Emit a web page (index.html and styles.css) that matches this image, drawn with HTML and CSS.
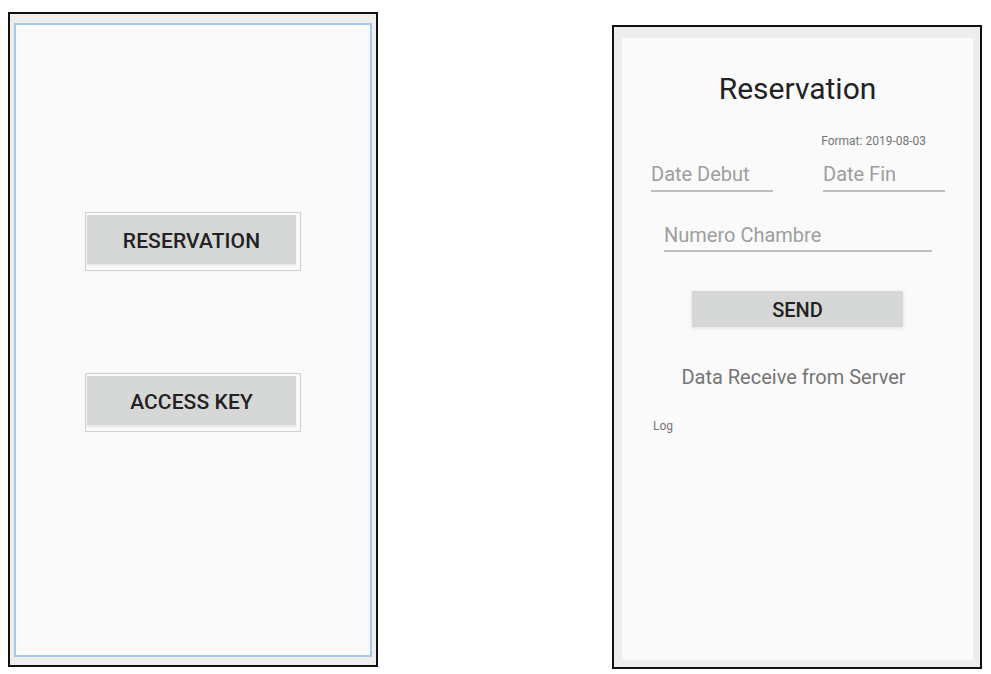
FILE: index.html
```html
<!DOCTYPE html>
<html lang="fr">
<head>
<meta charset="utf-8">
<title>Reservation</title>
<link rel="stylesheet" href="styles.css">
</head>
<body>
  <div class="frame frame-left">
    <div class="canvas">
      <div class="btn-wrap first"><div class="btn">RESERVATION</div></div>
      <div class="btn-wrap second"><div class="btn">ACCESS KEY</div></div>
    </div>
  </div>

  <div class="frame frame-right">
    <div class="screen">
      <h1 class="title">Reservation</h1>
      <div class="format">Format: 2019-08-03</div>
      <div class="date-row">
        <div class="field date">Date Debut</div>
        <div class="field date">Date Fin</div>
      </div>
      <div class="field room">Numero Chambre</div>
      <div class="send">SEND</div>
      <div class="data">Data Receive from Server</div>
      <div class="log">Log</div>
    </div>
  </div>
</body>
</html>
```

FILE: styles.css
```css
* { box-sizing: border-box; }

body {
  margin: 0;
  background: #ffffff;
  display: flex;
  align-items: flex-start;
  font-family: Roboto, "Liberation Sans", sans-serif;
}

.frame {
  border: 2px solid #111111;
  background: #eeeeee;
  width: 370px;
}

.frame-left {
  margin-left: 8px;
  margin-top: 12px;
  height: 655px;
  padding: 9px 4px 8px 4px;
}

.canvas {
  height: 100%;
  border: 2px solid #a6c8ea;
  background: #f9f9f9;
  display: flex;
  flex-direction: column;
  align-items: center;
}

.btn-wrap {
  width: 216px;
  height: 59px;
  border: 1px solid #cfcfcf;
  padding: 2px 4px 6px 1px;
  background: #fafafa;
}
.btn-wrap.first { margin-top: 187px; }
.btn-wrap.second { margin-top: 102px; }

.btn {
  height: 100%;
  background: #d6d7d7;
  color: #222222;
  font-size: 21px;
  font-weight: 500;
  letter-spacing: 0.1px;
  padding-top: 3px;
  display: flex;
  align-items: center;
  justify-content: center;
  box-shadow: 0 2px 2px rgba(0,0,0,0.08);
}

.frame-right {
  margin-left: 234px;
  margin-top: 25px;
  height: 644px;
  padding: 11px 7px 7px 8px;
}

.screen {
  height: 100%;
  background: #fafafa;
  display: flex;
  flex-direction: column;
}

.title {
  margin: 33px 0 0 0;
  font-size: 30px;
  line-height: 36px;
  font-weight: 400;
  color: #222222;
  text-align: center;
}

.format {
  margin-top: 27px;
  font-size: 12px;
  line-height: 14px;
  color: #757575;
  text-align: right;
  padding-right: 47px;
}

.date-row {
  margin-top: 14px;
  display: flex;
  gap: 50px;
  padding-left: 29px;
}

.field {
  font-size: 20px;
  line-height: 24px;
  color: #9e9e9e;
  border-bottom: 2px solid #bdbdbd;
}

.field.date {
  width: 122px;
  padding-bottom: 4px;
}

.field.room {
  margin-top: 31px;
  margin-left: 42px;
  width: 268px;
  padding-bottom: 3px;
}

.send {
  margin-top: 39px;
  align-self: center;
  width: 211px;
  height: 36px;
  background: #d6d7d7;
  color: #222222;
  font-size: 20px;
  font-weight: 500;
  padding-top: 2px;
  display: flex;
  align-items: center;
  justify-content: center;
  box-shadow: 0 1px 4px rgba(0,0,0,0.12);
}

.data {
  margin-top: 38px;
  font-size: 20px;
  line-height: 24px;
  color: #757575;
  text-align: center;
  padding-right: 8px;
}

.log {
  margin-top: 30px;
  margin-left: 31px;
  font-size: 12px;
  line-height: 14px;
  color: #757575;
}
```
